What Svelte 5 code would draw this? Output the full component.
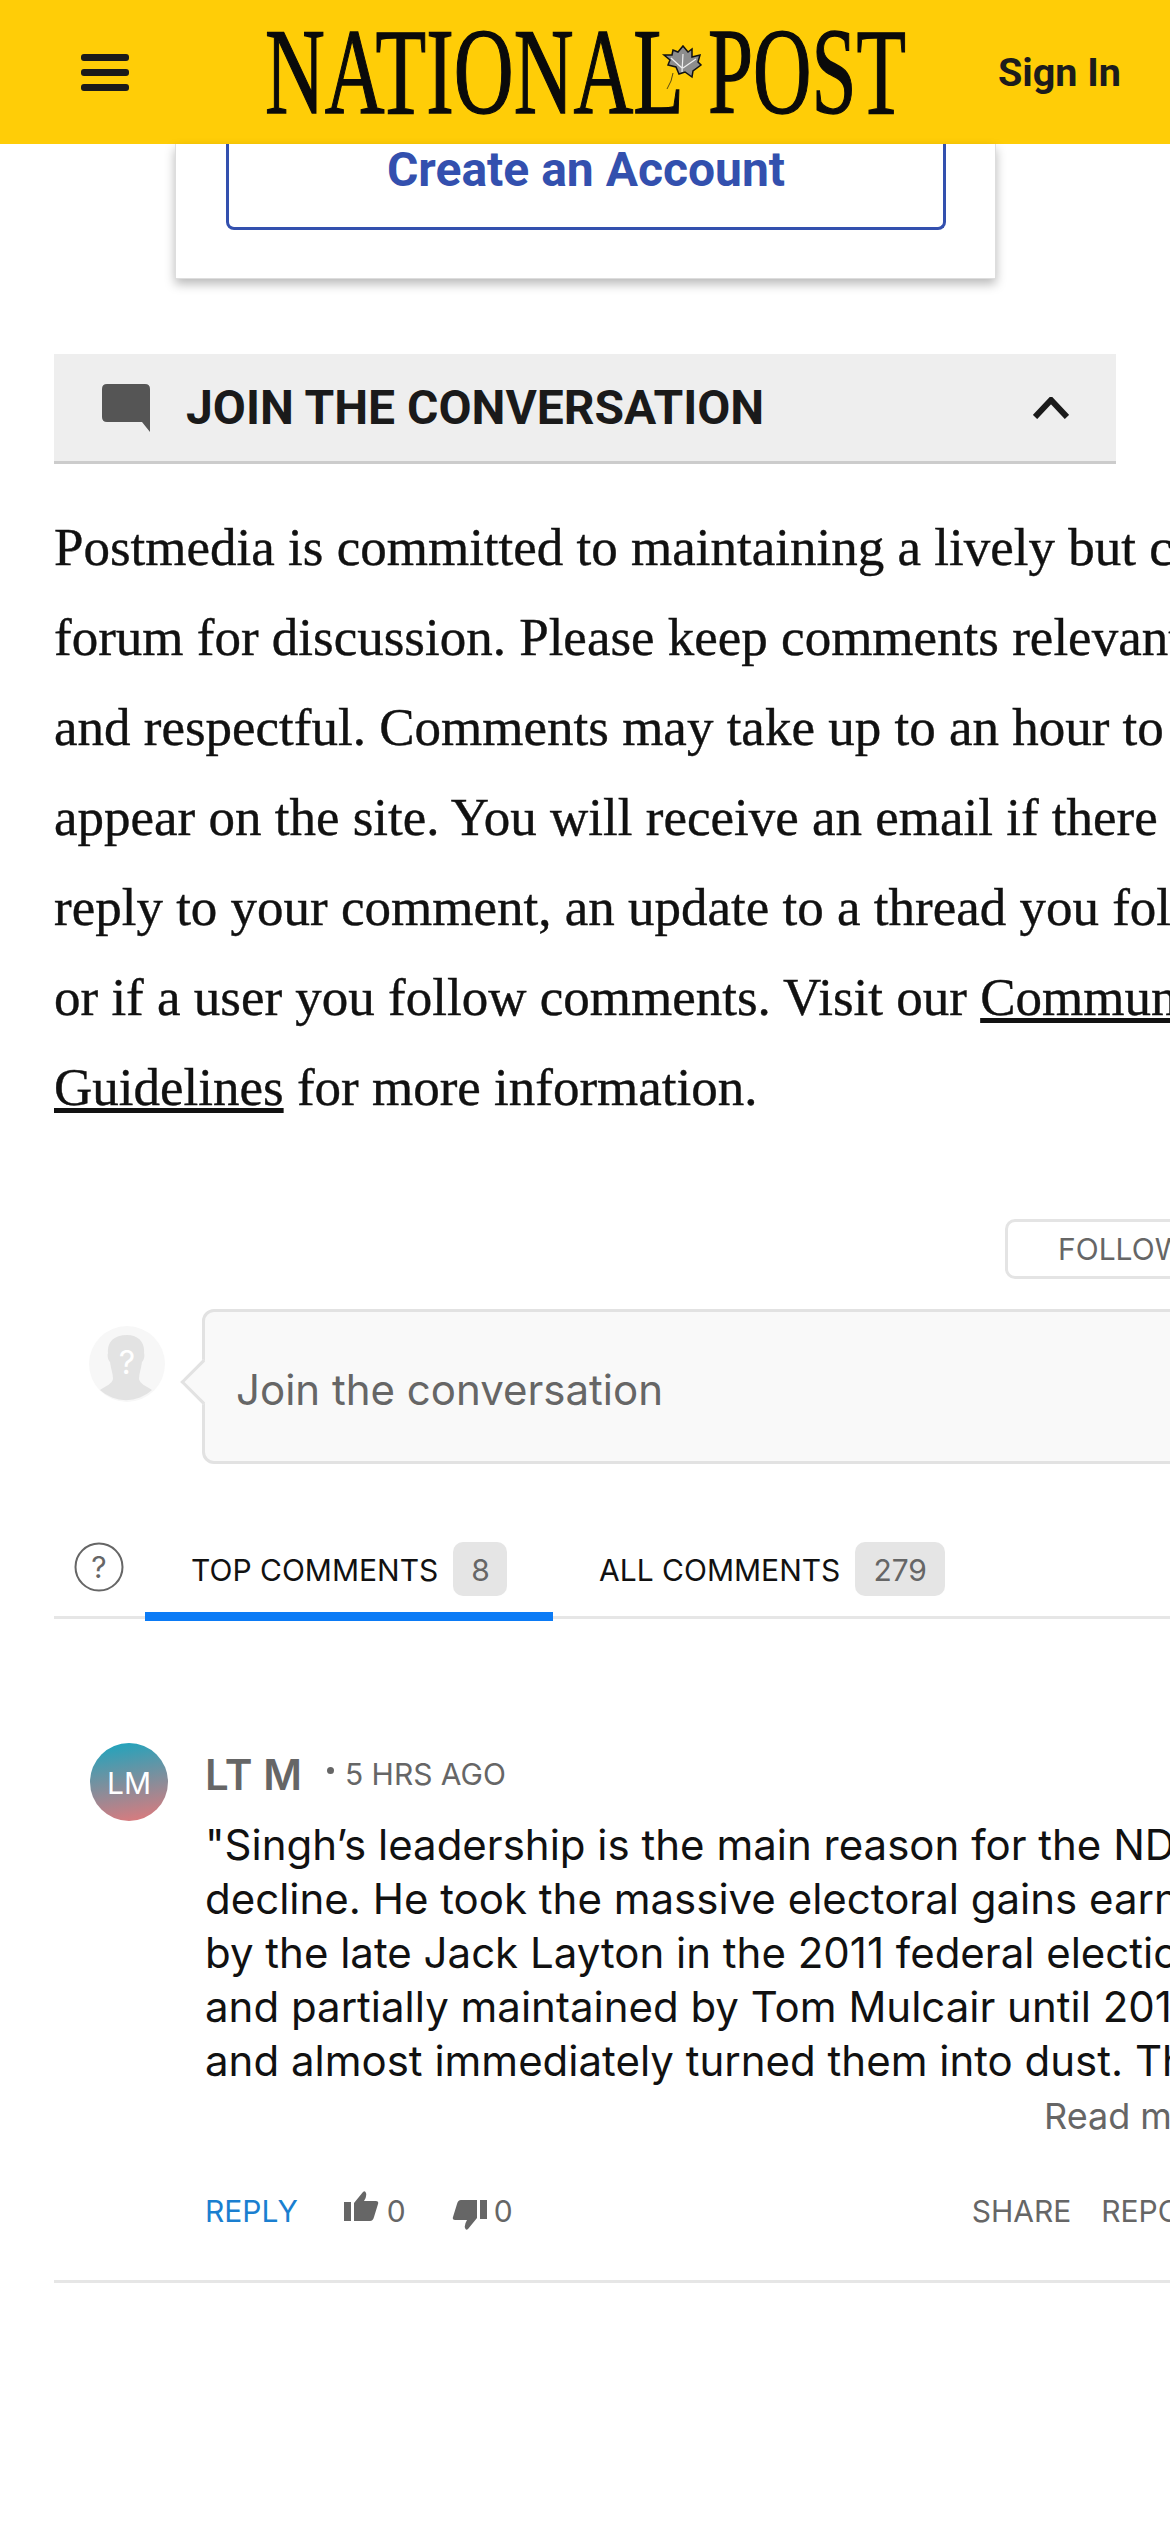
<script>
  const lines = [
    "Postmedia is committed to maintaining a lively but civil",
    "forum for discussion. Please keep comments relevant",
    "and respectful. Comments may take up to an hour to",
    "appear on the site. You will receive an email if there is a",
    "reply to your comment, an update to a thread you follow"
  ];
  const commentLines = [
    "\"Singh’s leadership is the main reason for the NDP's",
    "decline. He took the massive electoral gains earned",
    "by the late Jack Layton in the 2011 federal election",
    "and partially maintained by Tom Mulcair until 2015",
    "and almost immediately turned them into dust. The"
  ];
  const thumb = "M0 11h7v19H0zM10 12 19 1q2-2 3 1t-2 8h12q3 0 2 3l-4 13q-1 4-4 4H10z";
</script>

<div class="page">
  <header class="topbar">
    <div class="burger"><i></i><i></i><i></i></div>
    <svg class="logo" width="642" height="90" viewBox="0 0 642 90">
      <text x="0" y="83" font-size="123" textLength="419" lengthAdjust="spacingAndGlyphs">NATIONAL</text>
      <text x="443" y="83" font-size="123" textLength="198" lengthAdjust="spacingAndGlyphs">POST</text>
      <path d="M418 16l5 6 4-3 0 8 8-2-2 7 3 3-8 6-1 6-7-5-6 2-3-7-8-2 2-5-6-5 8 0 1-5 5 2z" fill="#8d8d8d" stroke="#111" stroke-width="1.5"/>
      <path d="M417 42l1-18M417 38l-11-10M418 38l13-9" fill="none" stroke="#eee" stroke-width="1.2"/>
      <path d="M402 59q5-8 6-16" fill="none" stroke="#5a4a10" stroke-width="1"/>
    </svg>
    <span class="signin">Sign In</span>
  </header>

  <div class="card">
    <div class="account">Create an Account</div>
  </div>

  <div class="join">
    <svg class="bubble" width="48" height="48" viewBox="0 0 48 48"><path d="M5 0h38q5 0 5 5v43l-8-10H5q-5 0-5-5V5q0-5 5-5z" fill="#555"/></svg>
    <h2>JOIN THE CONVERSATION</h2>
    <svg class="chevron" width="36" height="22" viewBox="0 0 36 22"><path d="M2 20 18 3l16 17" fill="none" stroke="#1a1a1a" stroke-width="6"/></svg>
  </div>

  <div class="copy">
    {#each lines as line}<div>{line}</div>{/each}
    <div>or if a user you follow comments. Visit our <u>Community</u></div>
    <div><u>Guidelines</u> for more information.</div>
  </div>

  <div class="follow-row"><span class="follow">FOLLOW</span></div>

  <div class="composer">
    <svg class="ghost" width="78" height="78" viewBox="0 0 78 78">
      <circle cx="39" cy="39" r="38" fill="#f7f7f7"/>
      <path d="M39 10c12 0 18 8 17 18 1 3 0 7-2 9-1 7-3 12-3 17 1 5 7 7 13 11a38 38 0 0 1-52 0c6-4 12-6 13-11 0-5-2-10-3-17-2-2-3-6-2-9-1-10 5-18 19-18z" fill="#e3e3e3"/>
      <text x="39" y="49" font-size="32" text-anchor="middle" fill="#fff">?</text>
    </svg>
    <div class="input">Join the conversation</div>
  </div>

  <div class="tabs">
    <svg class="help" width="50" height="50" viewBox="0 0 50 50">
      <circle cx="25" cy="25" r="23.5" fill="none" stroke="#666" stroke-width="2"/>
      <text x="25" y="36" font-size="30" text-anchor="middle" fill="#666">?</text>
    </svg>
    <div class="tab active"><span>TOP COMMENTS</span><b>8</b></div>
    <div class="tab"><span>ALL COMMENTS</span><b>279</b></div>
  </div>

  <article class="comment">
    <div class="avatar">LM</div>
    <div class="main">
      <div class="meta"><strong>LT M</strong><i></i><span>5 HRS AGO</span></div>
      <div class="body">
        {#each commentLines as line}<div>{line}</div>{/each}
      </div>
      <div class="more">Read more</div>
      <div class="actions">
        <span class="reply">REPLY</span>
        <span class="vote"><svg width="36" height="31" viewBox="0 0 36 31"><path d={thumb} fill="#666"/></svg>0</span>
        <span class="vote down"><svg width="36" height="31" viewBox="0 0 36 31"><path d={thumb} fill="#666" transform="rotate(180 18 15.5)"/></svg>0</span>
        <span class="right">SHARE</span>
        <span class="report">REPORT</span>
      </div>
    </div>
  </article>
</div>

<style>
  :global(body) {
    margin: 0;
    background: #fff;
  }

  .page {
    width: 1170px;
    height: 2532px;
    overflow: hidden;
    font-family: Inter, sans-serif;
    color: #111;
  }

  .topbar {
    height: 144px;
    background: #ffcd07;
    display: flex;
    align-items: center;
    padding-left: 81px;
  }

  .burger {
    width: 48px;
    flex: none;
    display: flex;
    flex-direction: column;
    gap: 8px;
  }

  .burger i {
    height: 7px;
    border-radius: 3px;
    background: #1a1a1a;
  }

  .logo {
    flex: none;
    margin-left: 136px;
    margin-top: 6px;
    font-family: "Liberation Serif", serif;
    fill: #0a0a0a;
  }

  .logo text {
    stroke: #0a0a0a;
    stroke-width: 1.4px;
  }

  .signin {
    margin-left: 91px;
    font: 700 39.5px Roboto, sans-serif;
    color: #1c1c1c;
    white-space: nowrap;
  }

  .card {
    width: 821px;
    height: 135px;
    margin-left: 175px;
    box-sizing: border-box;
    background: #fff;
    border: 1px solid #ddd;
    border-top: 0;
    box-shadow: 0 5px 10px rgba(0, 0, 0, 0.28);
  }

  .account {
    width: 720px;
    height: 86px;
    margin-left: 50px;
    box-sizing: border-box;
    border: 3px solid #3350ae;
    border-top: 0;
    border-radius: 0 0 8px 8px;
    text-align: center;
    font: 700 48px/52px Roboto, sans-serif;
    color: #3350ae;
  }

  .join {
    width: 1062px;
    height: 110px;
    margin: 75px 0 0 54px;
    box-sizing: border-box;
    padding: 0 47px 0 48px;
    background: #eee;
    border-bottom: 3px solid #ccc;
    display: flex;
    align-items: center;
  }

  .join h2 {
    flex: 1;
    margin: 0 0 0 36px;
    font: 700 48px Roboto, sans-serif;
    color: #1a1a1a;
  }

  .copy {
    margin: 38px 0 0 54px;
    font: 53px/90px "Liberation Serif", serif;
    -webkit-text-stroke: 0.4px #111;
    color: #111;
    white-space: nowrap;
  }

  .follow-row {
    margin: 87px 0 0 1005px;
    height: 60px;
  }

  .follow {
    display: block;
    width: 300px;
    height: 60px;
    box-sizing: border-box;
    border: 3px solid #e4e4e4;
    border-radius: 10px;
    padding-left: 50px;
    font-size: 30px;
    line-height: 54px;
    color: #666;
  }

  .composer {
    margin: 30px 0 0 88px;
    display: flex;
    align-items: flex-start;
  }

  .ghost {
    flex: none;
    margin-top: 16px;
  }

  .input {
    position: relative;
    flex: none;
    width: 1100px;
    height: 155px;
    margin-left: 36px;
    box-sizing: border-box;
    padding-left: 31px;
    background: #f9f9f9;
    border: 3px solid #e2e2e2;
    border-radius: 12px;
    font-size: 42px;
    line-height: 155px;
    color: #666;
  }

  .input::before {
    content: "";
    position: absolute;
    left: -18px;
    top: 54px;
    width: 32px;
    height: 32px;
    box-sizing: border-box;
    background: #f9f9f9;
    border-left: 3px solid #e2e2e2;
    border-bottom: 3px solid #e2e2e2;
    transform: rotate(45deg);
  }

  .tabs {
    margin: 78px 0 0 54px;
    height: 77px;
    width: 1116px;
    box-sizing: border-box;
    border-bottom: 3px solid #e6e6e6;
    display: flex;
    align-items: flex-start;
  }

  .help {
    flex: none;
    margin: 0 21px 0 20px;
  }

  .tab {
    flex: none;
    height: 79px;
    box-sizing: border-box;
    padding: 0 46px;
    display: flex;
    align-items: flex-start;
    gap: 15px;
    font-size: 30px;
    color: #111;
    white-space: nowrap;
  }

  .tab span {
    line-height: 56px;
  }

  .tab.active {
    width: 408px;
    padding-left: 46px;
    border-bottom: 9px solid #0b7bf6;
  }

  .tab b {
    min-width: 54px;
    height: 54px;
    box-sizing: border-box;
    padding: 0 18px;
    border-radius: 10px;
    background: #e5e5e5;
    text-align: center;
    font-weight: 400;
    line-height: 56px;
    color: #666;
  }

  .comment {
    margin: 124px 0 0 54px;
    width: 1116px;
    height: 540px;
    box-sizing: border-box;
    border-bottom: 3px solid #e6e6e6;
    padding-left: 36px;
    display: flex;
    gap: 37px;
    white-space: nowrap;
  }

  .avatar {
    width: 78px;
    height: 78px;
    flex: none;
    border-radius: 50%;
    background: linear-gradient(170deg, #17a6c0, #e5787a);
    color: #fff;
    text-align: center;
    font-size: 30px;
    line-height: 80px;
  }

  .meta {
    height: 62px;
    display: flex;
    align-items: center;
    color: #666;
    font-size: 30px;
  }

  .meta strong {
    font-size: 42px;
    font-weight: 600;
  }

  .meta i {
    flex: none;
    width: 7px;
    height: 7px;
    margin: -8px 11px 0 25px;
    border-radius: 50%;
    background: #666;
  }

  .body {
    margin-top: 13px;
    font-size: 42px;
    line-height: 54px;
    color: #111;
  }

  .more {
    margin: 3px 0 0 839px;
    font-size: 36px;
    line-height: 50px;
    color: #666;
  }

  .actions {
    margin-top: 50px;
    display: flex;
    align-items: center;
    font-size: 30px;
    color: #666;
  }

  .reply {
    color: #1a7fd0;
    margin-right: 46px;
  }

  .vote {
    display: flex;
    align-items: center;
    gap: 7px;
    margin-right: 45px;
  }

  .vote svg {
    margin-top: -8px;
  }

  .vote.down svg {
    margin-top: 8px;
  }

  .right {
    margin-left: 414px;
  }

  .report {
    margin-left: 30px;
  }
</style>
